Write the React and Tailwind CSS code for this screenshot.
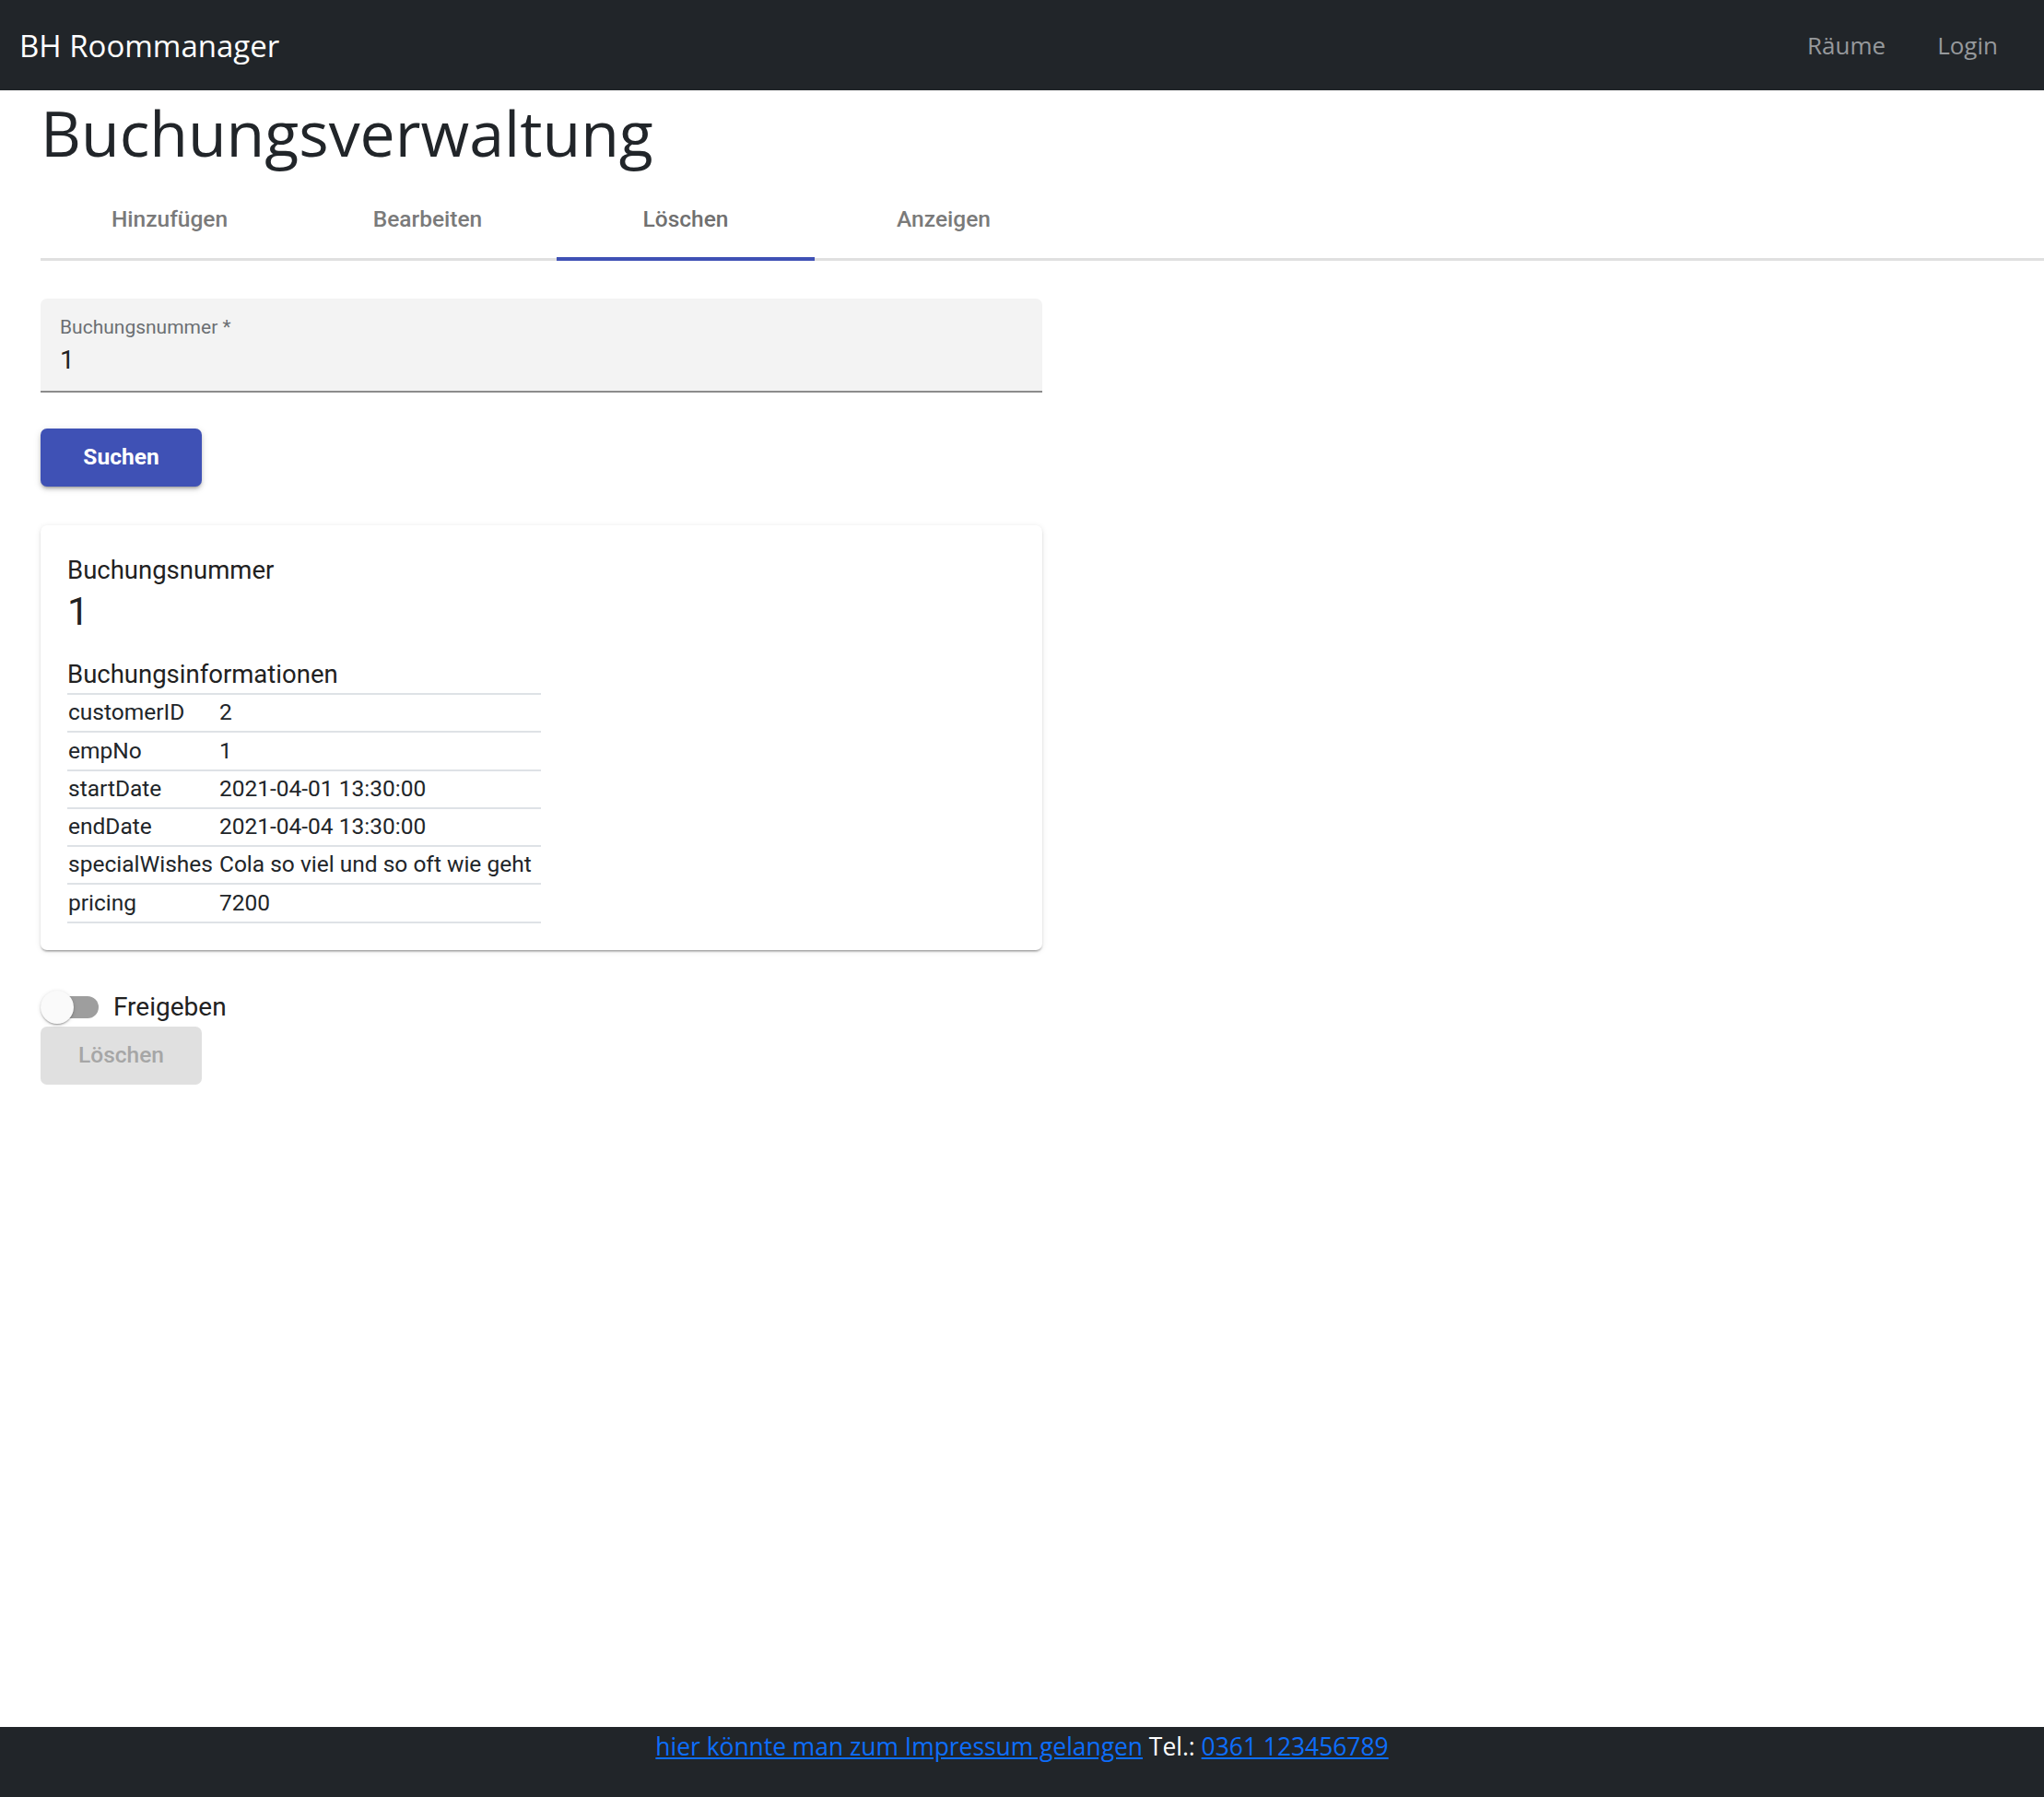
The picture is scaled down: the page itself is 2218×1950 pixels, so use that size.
import { useState } from "react";

const rows = [
  ["customerID", "2"],
  ["empNo", "1"],
  ["startDate", "2021-04-01 13:30:00"],
  ["endDate", "2021-04-04 13:30:00"],
  ["specialWishes", "Cola so viel und so oft wie geht"],
  ["pricing", "7200"],
];

const tabs = ["Hinzufügen", "Bearbeiten", "Löschen", "Anzeigen"];

function Navbar() {
  return (
    <nav className="h-[98px] bg-[#212529] flex items-center justify-between pl-[21px] pr-[50px] font-['Open_Sans','Noto_Sans',sans-serif]">
      <span className="text-white text-[33px] leading-none">BH Roommanager</span>
      <div className="flex items-center gap-[56px] text-[26px] text-[#96999c]">
        <a>Räume</a>
        <a>Login</a>
      </div>
    </nav>
  );
}

function Footer() {
  return (
    <footer className="mt-auto h-[76px] bg-[#212529] text-center font-['Open_Sans','Noto_Sans',sans-serif] text-[26.4px] leading-[42px]">
      <a className="text-[#0d6efd] underline">hier könnte man zum Impressum gelangen</a>
      <span className="text-white"> Tel.: </span>
      <a className="text-[#0d6efd] underline">0361 123456789</a>
    </footer>
  );
}

export default function App() {
  const [active] = useState(2);
  const [value] = useState("1");

  return (
    <div className="min-h-screen flex flex-col bg-white">
      <Navbar />

      <main className="pl-[44px] font-['Roboto',sans-serif]">
        <h1 className="font-['Open_Sans','Noto_Sans',sans-serif] text-[68px] leading-[84px] pt-[4px] text-[#212529] font-normal mb-[10px]">
          Buchungsverwaltung
        </h1>

        {/* Tabs */}
        <div className="flex border-b-[3px] border-[#e0e0e0]">
          {tabs.map((t, i) => (
            <div
              key={t}
              className={
                "relative w-[280px] h-[84px] flex items-center justify-center text-[24.5px] font-medium " +
                (i === active ? "text-[#707070]" : "text-[#7a7a7a]")
              }
            >
              {t}
              {i === active && (
                <span className="absolute left-0 right-0 bottom-[-3px] h-[4px] bg-[#3f51b5]" />
              )}
            </div>
          ))}
        </div>

        <div className="w-[1087px] mt-[41px]">
          {/* Text field */}
          <div className="bg-[#f3f3f3] rounded-t-[7px] border-b-2 border-[#8c8c8c] px-[21px] pt-[21px] pb-[17px]">
            <div className="text-[21px] leading-[21px] text-[#6b6f72]">Buchungsnummer *</div>
            <div className="mt-[8px] text-[28px] leading-[33px] text-[#212121]">{value}</div>
          </div>

          <button className="mt-[39px] w-[175px] h-[63px] rounded-[7px] bg-[#3f51b5] text-white text-[24.5px] font-bold shadow-[0_3px_3px_-2px_rgba(0,0,0,0.25),0_3px_4px_0_rgba(0,0,0,0.14),0_2px_9px_0_rgba(0,0,0,0.12)]">
            Suchen
          </button>

          {/* Card */}
          <div className="mt-[42px] rounded-[7px] bg-white px-[29px] pt-[28px] pb-[29px] shadow-[0_3px_2px_-2px_rgba(0,0,0,0.25),0_2px_2px_0_rgba(0,0,0,0.14),0_1px_6px_0_rgba(0,0,0,0.1)] text-[#212121]">
            <div className="text-[27.5px] leading-[42px]">Buchungsnummer</div>
            <div className="text-[42px] leading-[48px]">1</div>
            <div className="mt-[24px] text-[27.5px] leading-[40px]">Buchungsinformationen</div>
            <table className="border-t-2 border-[#dee2e6] text-[24.5px] text-[#212529]">
              <tbody>
                {rows.map(([k, v]) => (
                  <tr key={k} className="border-b-2 border-[#dee2e6] h-[41.3px]">
                    <td className="pl-[1px] pr-[4px] py-0 whitespace-nowrap">{k}</td>
                    <td className="pl-[3px] pr-[10px] py-0 whitespace-nowrap">{v}</td>
                  </tr>
                ))}
              </tbody>
            </table>
          </div>

          {/* Switch */}
          <div className="mt-[42px] h-[40px] flex items-center">
            <div className="relative w-[63px] h-[36px] flex items-center">
              <div className="absolute left-[4px] right-0 h-[24px] rounded-full bg-[#9e9e9e]" />
              <div className="absolute left-0 w-[36px] h-[36px] rounded-full bg-[#fafafa] shadow-[0_2px_2px_-1px_rgba(0,0,0,0.25),0_1px_2px_0_rgba(0,0,0,0.14),0_1px_5px_0_rgba(0,0,0,0.12)]" />
            </div>
            <span className="ml-[16px] text-[28px] text-[#212121]">Freigeben</span>
          </div>

          <button disabled className="mt-[1px] w-[175px] h-[63px] rounded-[7px] bg-[#e0e0e0] text-[#a6a6a6] text-[24.5px] font-medium">
            Löschen
          </button>
        </div>
      </main>

      <Footer />
    </div>
  );
}
